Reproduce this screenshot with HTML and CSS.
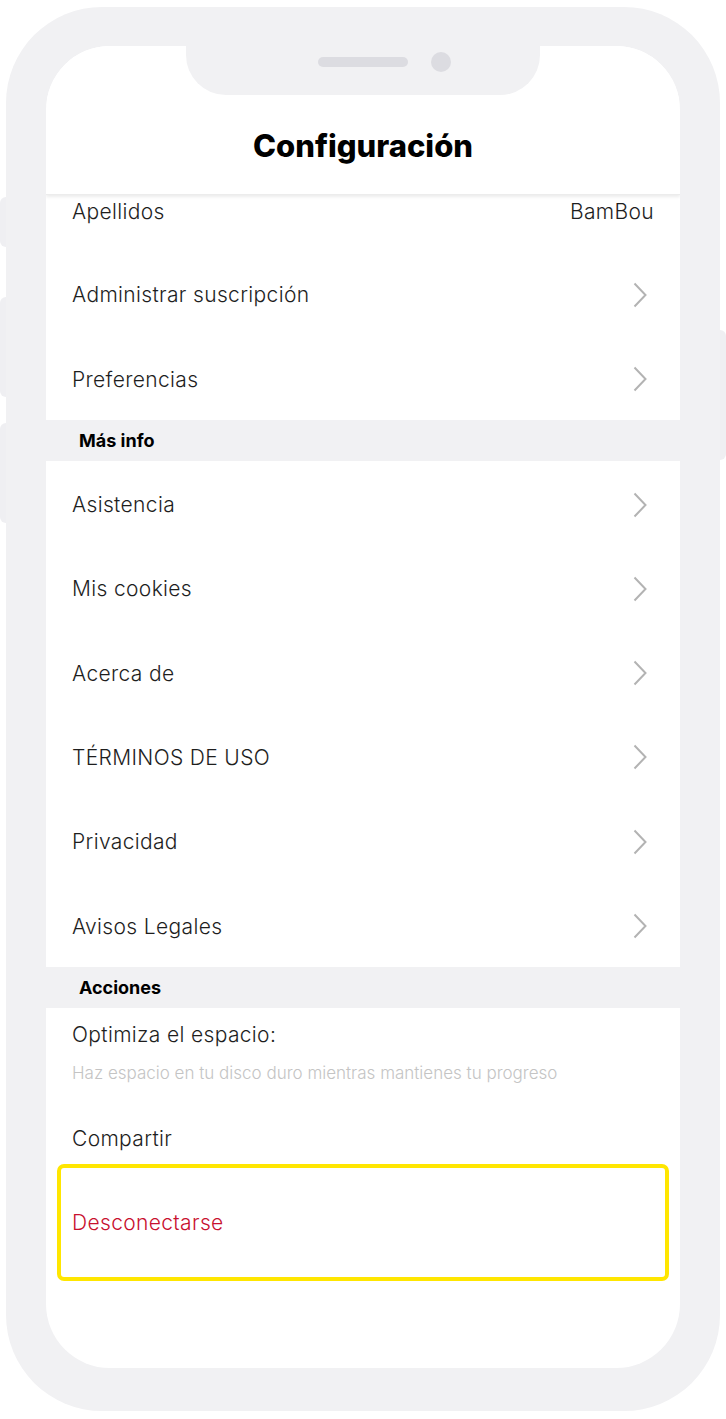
FILE: index.html
```html
<!DOCTYPE html>
<html lang="es">
<head>
<meta charset="utf-8">
<title>Configuración</title>
<link rel="stylesheet" href="styles.css">
</head>
<body>
<div class="device">
  <span class="side-btn left b1"></span>
  <span class="side-btn left b2"></span>
  <span class="side-btn left b3"></span>
  <span class="side-btn right b4"></span>
  <div class="frame">
    <div class="screen">
      <div class="notch"><span class="speaker"></span><span class="camera"></span></div>
      <header class="topbar"><h1>Configuración</h1></header>
      <div class="content">
        <div class="list">
          <div class="row first"><span class="label">Apellidos</span><span class="value">BamBou</span></div>
          <div class="row"><span class="label">Administrar suscripción</span><svg class="chev" viewBox="0 0 14 26"><path d="M1.5 1.5 L12.5 13 L1.5 24.5"/></svg></div>
          <div class="row"><span class="label">Preferencias</span><svg class="chev" viewBox="0 0 14 26"><path d="M1.5 1.5 L12.5 13 L1.5 24.5"/></svg></div>
          <div class="section">Más info</div>
          <div class="row"><span class="label">Asistencia</span><svg class="chev" viewBox="0 0 14 26"><path d="M1.5 1.5 L12.5 13 L1.5 24.5"/></svg></div>
          <div class="row"><span class="label">Mis cookies</span><svg class="chev" viewBox="0 0 14 26"><path d="M1.5 1.5 L12.5 13 L1.5 24.5"/></svg></div>
          <div class="row"><span class="label">Acerca de</span><svg class="chev" viewBox="0 0 14 26"><path d="M1.5 1.5 L12.5 13 L1.5 24.5"/></svg></div>
          <div class="row"><span class="label">TÉRMINOS DE USO</span><svg class="chev" viewBox="0 0 14 26"><path d="M1.5 1.5 L12.5 13 L1.5 24.5"/></svg></div>
          <div class="row"><span class="label">Privacidad</span><svg class="chev" viewBox="0 0 14 26"><path d="M1.5 1.5 L12.5 13 L1.5 24.5"/></svg></div>
          <div class="row"><span class="label">Avisos Legales</span><svg class="chev" viewBox="0 0 14 26"><path d="M1.5 1.5 L12.5 13 L1.5 24.5"/></svg></div>
          <div class="section">Acciones</div>
          <div class="actions">
            <div class="optimize">
              <span class="label">Optimiza el espacio:</span>
              <span class="sub">Haz espacio en tu disco duro mientras mantienes tu progreso</span>
            </div>
            <div class="share"><span class="label">Compartir</span></div>
            <div class="logout"><span class="label danger">Desconectarse</span></div>
          </div>
        </div>
      </div>
    </div>
  </div>
</div>
</body>
</html>
```

FILE: styles.css
```css
* { box-sizing: border-box; }
html, body { margin: 0; padding: 0; background: #ffffff; }
body { width: 726px; height: 1419px; overflow: hidden; font-family: "Inter", "Lato", sans-serif; color: #1e1e1e; }

.device { position: relative; width: 726px; height: 1419px; padding: 7px 6px 8px 6px; }
.side-btn { position: absolute; background: #efeff2; }
.side-btn.left { left: 0; width: 10px; border-radius: 6px 0 0 6px; }
.side-btn.right { right: 0; width: 10px; border-radius: 0 6px 6px 0; }
.b1 { top: 197px; height: 50px; }
.b2 { top: 297px; height: 100px; }
.b3 { top: 423px; height: 100px; }
.b4 { top: 330px; height: 130px; }

.frame {
  position: relative;
  width: 714px; height: 1404px;
  background: #f1f1f3;
  border-radius: 96px;
  padding: 39px 40px 43px 40px;
}
.screen {
  position: relative;
  width: 634px; height: 1322px;
  background: #ffffff;
  border-radius: 64px;
  overflow: hidden;
  display: flex; flex-direction: column;
}
.notch {
  position: absolute; top: 0; left: 140px;
  width: 354px; height: 49px;
  background: #f1f1f3;
  border-radius: 0 0 40px 40px;
  display: flex; align-items: center; justify-content: center;
  gap: 23px; padding: 0 0 17px 42px;
  z-index: 3;
}
.speaker { width: 90px; height: 10px; border-radius: 5px; background: #dcdce1; }
.camera { width: 20px; height: 20px; border-radius: 50%; background: #dcdce1; }

.topbar {
  position: relative; z-index: 2;
  height: 149px; flex: none;
  background: #ffffff;
  display: flex; align-items: flex-end; justify-content: center;
  padding-bottom: 28px;
  box-shadow: 0 2px 3px rgba(0,0,0,0.08);
  border-bottom: 1px solid #ececec;
}
.topbar h1 { margin: 0; font-family: "Inter", sans-serif; font-weight: 800; font-size: 31px; line-height: 40px; color: #000; letter-spacing: 0; }

.content { flex: 1; overflow: hidden; position: relative; z-index: 1; }
.list { margin-top: -28px; }

.row {
  height: 84.3px;
  display: flex; align-items: center; justify-content: space-between;
  padding: 3px 33px 0 26px;
}
.row.first { padding-top: 5px; }
.label { font-size: 21px; font-weight: 300; color: #1e1e1e; letter-spacing: 0.35px; }
.value { font-size: 21px; font-weight: 300; color: #1e1e1e; letter-spacing: 0.35px; margin-right: -7px; }
.chev { width: 14px; height: 26px; fill: none; stroke: #b3b3b3; stroke-width: 2; }

.section {
  height: 41px; background: #f1f1f3;
  display: flex; align-items: center;
  padding-left: 33px;
  font-weight: 700; font-size: 18px; color: #000;
}

.actions { display: flex; flex-direction: column; padding: 0 11px; }
.optimize { display: flex; flex-direction: column; padding: 13px 15px 0 15px; }
.optimize .label { line-height: 28px; }
.sub { font-size: 17px; font-weight: 300; line-height: 22px; margin-top: 13px; color: #c4c4c4; }
.share { padding: 41px 15px 0 15px; line-height: 28px; height: 82px; }
.share .label { line-height: 28px; }
.logout {
  margin-top: -2px;
  height: 117px;
  border: 4px solid #ffe600;
  border-radius: 7px;
  display: flex; align-items: center;
  padding-left: 11px;
}
.danger { color: #c8102e; }
```
